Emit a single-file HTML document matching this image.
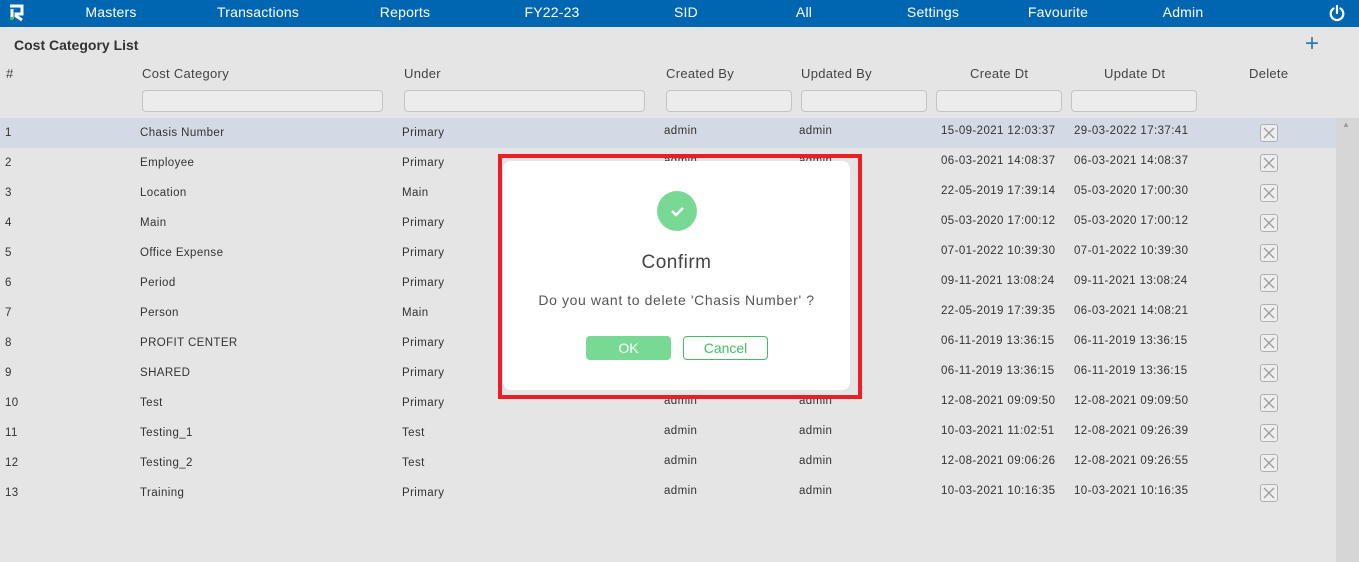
<!DOCTYPE html>
<html><head><style>
*{margin:0;padding:0;box-sizing:border-box}
body{width:1359px;height:562px;background:#e5e5e5;font-family:"Liberation Sans",sans-serif;position:relative;overflow:hidden;color:#333}
.nav{position:absolute;left:0;top:0;width:1359px;height:27px;background:#0066b1}
.nav span{position:absolute;top:4px;color:#fff;font-size:14px;transform:translateX(-50%);letter-spacing:0.2px}
.a{position:absolute;white-space:nowrap}
.h{font-size:13px;color:#444;top:66px;letter-spacing:0.3px}
.in{position:absolute;top:90px;height:22px;border:1px solid #c4c4c4;border-radius:4px;background:#ececec}
.row{position:absolute;left:0;width:1336px;height:30px;font-size:11.5px;color:#333;letter-spacing:0.4px}
.row span{position:absolute;top:8px;white-space:nowrap}
.x{position:absolute;left:1260px;top:6px;width:18px;height:18px;border:1px solid #b0b0b0;border-radius:3px;background:#eee}
</style></head><body>
<div class="nav">
<svg style="position:absolute;left:8px;top:4px" width="18" height="18" viewBox="0 0 18 18"><path d="M2 2h12v8H8v2l6 4" fill="none" stroke="#fff" stroke-width="3"/><path d="M4 5v10" stroke="#fff" stroke-width="3"/><rect x="2" y="13" width="3" height="3" fill="#3c3"/></svg>
<span style="left:111px">Masters</span><span style="left:258px">Transactions</span><span style="left:405px">Reports</span><span style="left:552px">FY22-23</span><span style="left:686px">SID</span><span style="left:804px">All</span><span style="left:933px">Settings</span><span style="left:1058px">Favourite</span><span style="left:1183px">Admin</span>
<svg style="position:absolute;left:1328px;top:4px" width="18" height="18" viewBox="0 0 18 18"><path d="M5.5 4.5A6.3 6.3 0 1 0 12.5 4.5" fill="none" stroke="#fff" stroke-width="2.2" stroke-linecap="round"/><path d="M9 2v7" stroke="#fff" stroke-width="2.2" stroke-linecap="round"/></svg>
</div>
<div class="a" style="left:14px;top:37px;font-size:14px;font-weight:bold;color:#333">Cost Category List</div>
<div class="a" style="left:1305px;top:30px;font-size:24px;color:#2a7bc0;font-weight:300">+</div>
<div class="a h" style="left:6px">#</div>
<div class="a h" style="left:142px">Cost Category</div>
<div class="a h" style="left:404px">Under</div>
<div class="a h" style="left:666px">Created By</div>
<div class="a h" style="left:801px">Updated By</div>
<div class="a h" style="left:970px">Create Dt</div>
<div class="a h" style="left:1104px">Update Dt</div>
<div class="a h" style="left:1249px">Delete</div>
<div class="in" style="left:142px;width:241px"></div>
<div class="in" style="left:404px;width:241px"></div>
<div class="in" style="left:666px;width:126px"></div>
<div class="in" style="left:801px;width:126px"></div>
<div class="in" style="left:936px;width:126px"></div>
<div class="in" style="left:1071px;width:126px"></div>
<div style="position:absolute;left:1336px;top:118px;width:23px;height:444px;background:#d6d6d6"></div>
<div class="a" style="left:1342px;top:120px;font-size:8px;color:#999">▲</div>
<div id="rows"></div>
<script>
var d=[["Chasis Number","Primary","15-09-2021 12:03:37","29-03-2022 17:37:41"],["Employee","Primary","06-03-2021 14:08:37","06-03-2021 14:08:37"],["Location","Main","22-05-2019 17:39:14","05-03-2020 17:00:30"],["Main","Primary","05-03-2020 17:00:12","05-03-2020 17:00:12"],["Office Expense","Primary","07-01-2022 10:39:30","07-01-2022 10:39:30"],["Period","Primary","09-11-2021 13:08:24","09-11-2021 13:08:24"],["Person","Main","22-05-2019 17:39:35","06-03-2021 14:08:21"],["PROFIT CENTER","Primary","06-11-2019 13:36:15","06-11-2019 13:36:15"],["SHARED","Primary","06-11-2019 13:36:15","06-11-2019 13:36:15"],["Test","Primary","12-08-2021 09:09:50","12-08-2021 09:09:50"],["Testing_1","Test","10-03-2021 11:02:51","12-08-2021 09:26:39"],["Testing_2","Test","12-08-2021 09:06:26","12-08-2021 09:26:55"],["Training","Primary","10-03-2021 10:16:35","10-03-2021 10:16:35"]];
var h="";d.forEach(function(r,i){var t=118+i*30;h+='<div class="row" style="top:'+t+'px;'+(i==0?'background:#d3dae5':'')+'"><span style="left:5px;top:9px">'+(i+1)+'</span><span style="left:140px;top:9px">'+r[0]+'</span><span style="left:402px;top:9px">'+r[1]+'</span><span style="left:664px;top:7px">admin</span><span style="left:799px;top:7px">admin</span><span style="left:941px;top:7px">'+r[2]+'</span><span style="left:1074px;top:7px">'+r[3]+'</span><div class="x"><svg width="16" height="16" viewBox="0 0 16 16"><path d="M3 3L13 13M13 3L3 13" stroke="#999" stroke-width="1.3"/></svg></div></div>'});
document.getElementById("rows").innerHTML=h;
</script>
<div style="position:absolute;left:498px;top:154px;width:364px;height:245px;border:4px solid #ee1c25"></div>
<div style="position:absolute;left:503px;top:161px;width:347px;height:229px;background:#fff;border-radius:8px;text-align:center">
<div style="position:absolute;left:154px;top:30px;width:40px;height:40px;border-radius:50%;background:#77d994"><svg width="40" height="40" viewBox="0 0 40 40"><path d="M15 20l4 4 7-7" fill="none" stroke="#fff" stroke-width="2.5"/></svg></div>
<div style="position:absolute;left:0;width:347px;top:91px;font-size:19px;color:#444;letter-spacing:0.5px">Confirm</div>
<div style="position:absolute;left:0;width:347px;top:131px;font-size:14px;color:#555;letter-spacing:0.6px">Do you want to delete 'Chasis Number' ?</div>
<div style="position:absolute;left:83px;top:175px;width:85px;height:24px;background:#77d994;border-radius:4px;color:#fff;font-size:14px;line-height:24px">OK</div>
<div style="position:absolute;left:180px;top:175px;width:85px;height:24px;border:1px solid #3fbf5f;border-radius:4px;color:#3fbf5f;font-size:14px;line-height:22px">Cancel</div>
</div>
</body></html>
